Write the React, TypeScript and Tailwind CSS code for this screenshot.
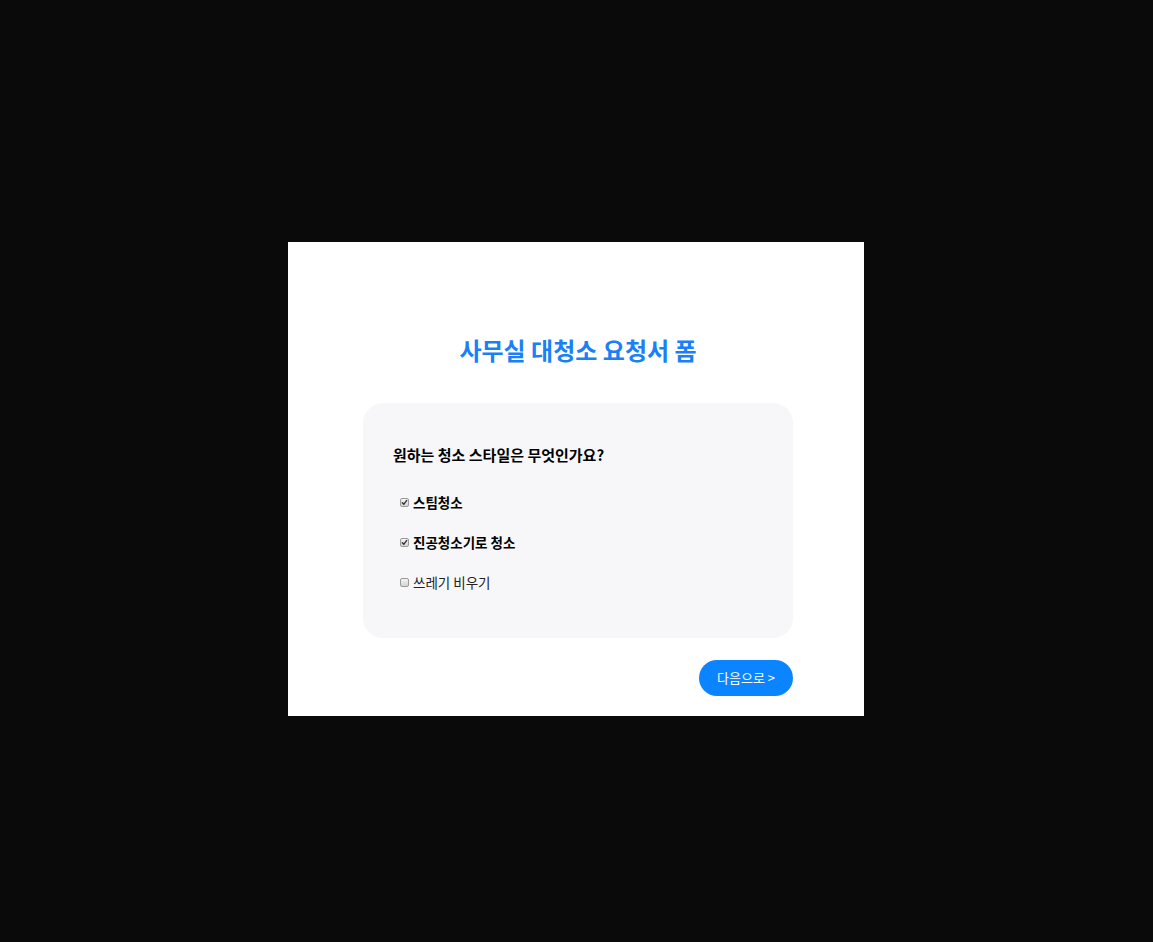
import React from "react";

function Check({ checked }: { checked: boolean }) {
  return (
    <span className="inline-flex h-[9px] w-[9px] items-center justify-center rounded-[2px] border border-[#9a9a9a] bg-gradient-to-b from-[#f4f4f4] to-[#d4d4d4]">
      {checked && (
        <svg width="7" height="7" viewBox="0 0 8 8">
          <path d="M1.5 4.2 L3.2 6 L6.6 1.6" fill="none" stroke="#333" strokeWidth="1.5" strokeLinecap="round" strokeLinejoin="round" />
        </svg>
      )}
    </span>
  );
}

export default function App() {
  const items = [
    { label: "스팀청소", checked: true },
    { label: "진공청소기로 청소", checked: true },
    { label: "쓰레기 비우기", checked: false },
  ];
  return (
    <div
      className="flex h-[942px] w-full items-start bg-[#0a0a0a] pl-[288px] pt-[242px]"
      style={{ fontFamily: '"Noto Sans CJK KR", "Noto Sans", sans-serif' }}
    >
      <div className="flex h-[474px] w-[576px] flex-col bg-white pl-[75px] pr-[71px] pt-[88px] pb-[20px]">
        <h1 className="text-center text-[24px] font-bold leading-[40px] text-[#1a80f5]">
          사무실 대청소 요청서 폼
        </h1>
        <div className="mt-[33px] flex h-[235px] flex-col rounded-[20px] bg-[#f7f7fa] pl-[30px] pt-[40px]">
          <div className="text-[15px] font-bold leading-[24px] text-black">
            원하는 청소 스타일은 무엇인가요?
          </div>
          <div className="mt-[23px] flex flex-col gap-[16px] pl-[7px]">
            {items.map((it) => (
              <label key={it.label} className="flex h-[24px] items-center gap-[4px]">
                <Check checked={it.checked} />
                <span
                  className={
                    it.checked
                      ? "text-[13.5px] font-bold leading-[24px] text-black"
                      : "text-[13.5px] leading-[24px] text-[#222]"
                  }
                >
                  {it.label}
                </span>
              </label>
            ))}
          </div>
        </div>
        <div className="mt-[22px] flex justify-end">
          <button className="h-[36px] w-[94px] rounded-full bg-[#0a84ff] text-[13px] text-white">
            다음으로 &gt;
          </button>
        </div>
      </div>
    </div>
  );
}
